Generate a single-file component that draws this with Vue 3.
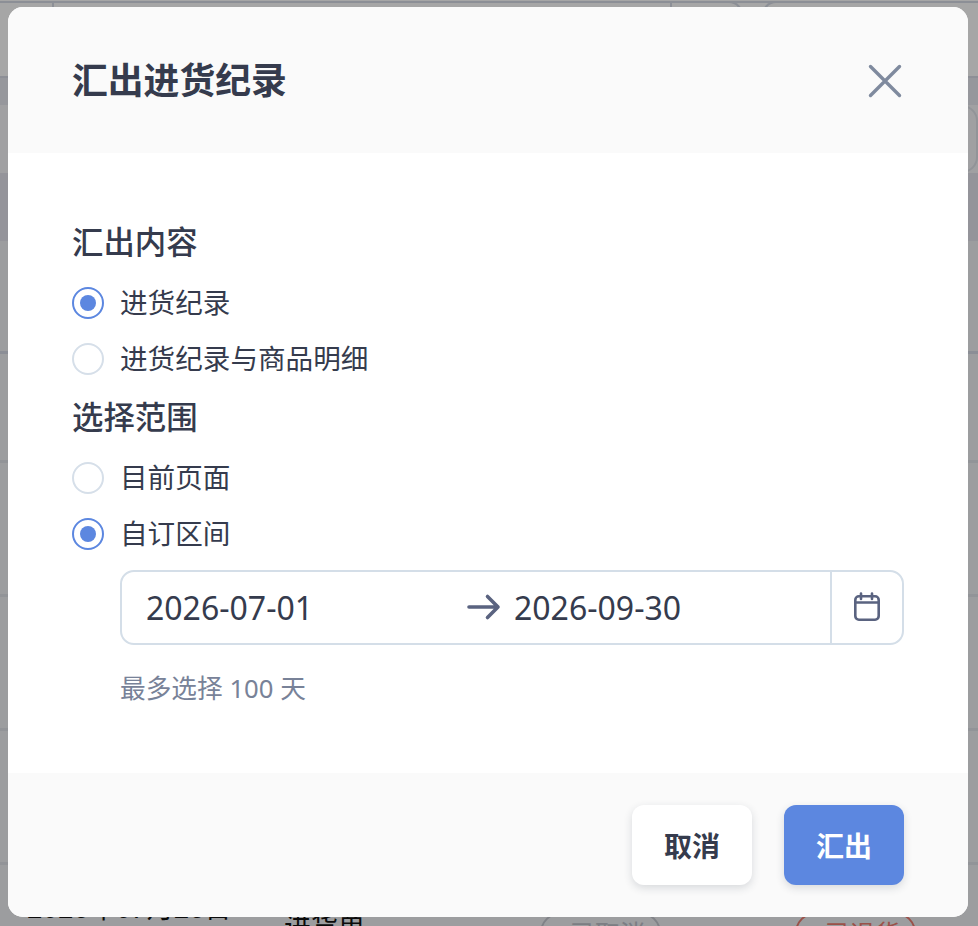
<script setup>
import { ref } from 'vue'

const contentOptions = ['进货纪录', '进货纪录与商品明细']
const rangeOptions = ['目前页面', '自订区间']
const content = ref('进货纪录')
const range = ref('自订区间')
const startDate = ref('2026-07-01')
const endDate = ref('2026-09-30')
</script>

<template>
  <div class="page">
    <!-- 背后的列表页，大部分被弹窗挡住 -->
    <div class="top-line"></div>
    <div class="toolbar">
      <div class="tool-main"></div>
      <div class="tool-select"></div>
      <div class="tool-btn"></div>
    </div>
    <div class="band"></div>
    <div class="filter-row"><div class="filter-box"></div></div>
    <div class="table-head"></div>
    <div class="row row-a"></div>
    <div class="row row-b"></div>
    <div class="row row-c"></div>
    <div class="row row-c"></div>
    <div class="row row-c"></div>
    <div class="row-last">
      <span class="cell-date">2026年07月26日</span>
      <span class="cell-type">进货单</span>
      <span class="pill pill-gray"><i></i>已取消</span>
      <span class="pill pill-red"><i></i>已退货</span>
    </div>

    <div class="overlay">
      <div class="modal">
        <header class="modal-head">
          <h2>汇出进货纪录</h2>
          <button class="close" aria-label="关闭">
            <svg width="36" height="36" viewBox="0 0 36 36" fill="none">
              <path d="M3.5 3.5 L32.5 32.5 M32.5 3.5 L3.5 32.5" stroke="#7f8a9e" stroke-width="3.4" stroke-linecap="round" />
            </svg>
          </button>
        </header>

        <section class="modal-body">
          <div class="group-title">汇出内容</div>
          <div
            v-for="opt in contentOptions"
            :key="opt"
            class="option"
            @click="content = opt"
          >
            <span :class="['radio', { on: content === opt }]"></span>
            <span class="option-text">{{ opt }}</span>
          </div>

          <div class="group-title second">选择范围</div>
          <div
            v-for="opt in rangeOptions"
            :key="opt"
            class="option"
            @click="range = opt"
          >
            <span :class="['radio', { on: range === opt }]"></span>
            <span class="option-text">{{ opt }}</span>
          </div>

          <div class="date-wrap">
            <div class="date-box">
              <div class="date-text">
                <span class="date-start">{{ startDate }}</span>
                <svg class="arrow" width="34" height="28" viewBox="0 0 34 28" fill="none">
                  <path d="M2 14 H31 M20.5 3.5 L31 14 L20.5 24.5" stroke="#5a6380" stroke-width="3.6" stroke-linecap="round" stroke-linejoin="round" />
                </svg>
                <span class="date-end">{{ endDate }}</span>
              </div>
              <div class="date-icon">
                <svg width="30" height="32" viewBox="0 0 30 32" fill="none" stroke="#5a6380" stroke-width="2.6" stroke-linecap="round" stroke-linejoin="round">
                  <rect x="3.3" y="5.3" width="23.4" height="23.4" rx="3.6" />
                  <path d="M3.3 11.5 H26.7 M9 2.5 V8 M20 2.5 V8" />
                </svg>
              </div>
            </div>
            <div class="hint">最多选择 100 天</div>
          </div>
        </section>

        <footer class="modal-foot">
          <button class="btn">取消</button>
          <button class="btn primary">汇出</button>
        </footer>
      </div>
    </div>
  </div>
</template>

<style>
html, body { margin: 0; padding: 0; }
</style>

<style scoped>
.page {
  position: relative;
  height: 926px;
  overflow: hidden;
  background: #f0f1f5;
  font-family: "Noto Sans", "Noto Sans CJK SC", sans-serif;
}
.top-line { height: 1px; background: #fff; }
.toolbar { display: flex; height: 75px; box-sizing: border-box; background: #fff; border-top: 2px solid #d8dce6; }
.tool-main { width: 616px; margin-left: 52px; height: 60px; border-left: 2px solid #d8dce6; border-right: 2px solid #d8dce6; }
.tool-select { width: 69px; height: 60px; border-right: 2px solid #d8dce6; border-top: 2px solid #d8dce6; border-radius: 0 14px 0 0; margin-top: -2px; }
.tool-btn { flex: 1; margin-left: 19px; height: 60px; border-left: 2px solid #d8dce6; border-top: 2px solid #d8dce6; border-radius: 14px 0 0 0; margin-top: -2px; }
.band { height: 29px; background: #e6e8f0; border-top: 2px solid #d9dce6; box-sizing: border-box; }
.filter-row { height: 68px; background: #f6f6f9; display: flex; justify-content: flex-end; }
.filter-box { width: 100px; height: 68px; box-sizing: border-box; border: 2px solid #e0e3ea; border-left: 0; border-radius: 0 16px 16px 0; }
.table-head { height: 68px; background: #e3e4ed; }
.row { box-sizing: border-box; border-top: 3px solid #d6dae6; }
.row-a { height: 110px; border-top: 0; }
.row-b { height: 109px; }
.row-c { height: 134px; border-top-color: #e0e3ea; }
.row-last {
  height: 64px;
  box-sizing: border-box;
  border-top: 3px solid #e0e3ea;
  display: flex;
  align-items: flex-start;
  padding: 41px 0 0 27px;
  font-size: 27px;
  line-height: 40px;
  color: #111;
}
.cell-date { width: 257px; margin-top: -18px; }
.cell-type { width: 256px; }
.pill {
  box-sizing: border-box;
  width: 121px;
  height: 42px;
  margin-top: 6px;
  display: inline-flex;
  align-items: center;
  justify-content: center;
  gap: 8px;
  border: 2px solid #c5c8d0;
  border-radius: 22px;
  color: #bfc2ca;
  font-size: 25px;
}
.pill i { width: 6px; height: 6px; border-radius: 50%; background: currentColor; }
.pill-red { margin-left: 134px; color: #ee7d70; border-color: #ee7d70; }

.overlay {
  position: absolute;
  inset: 0;
  background: rgba(0, 0, 0, 0.35);
  display: flex;
  align-items: flex-start;
  justify-content: center;
  padding: 7px 2px 0 0;
}
.modal {
  width: 960px;
  height: 910px;
  border-radius: 15px;
  overflow: hidden;
  background: #fff;
  display: flex;
  flex-direction: column;
  color: #353b4d;
}
.modal-head {
  height: 146px;
  box-sizing: border-box;
  background: #fafafa;
  padding: 0 65.5px 0 64px;
  display: flex;
  align-items: center;
  justify-content: space-between;
}
.modal-head h2 {
  margin: 0;
  font-size: 35.8px;
  font-weight: 700;
  line-height: 50px;
}
.close { padding: 0; margin-top: 2px; border: 0; background: none; display: flex; cursor: pointer; }

.modal-body { flex: 1; padding: 67px 64px 0; }
.group-title { font-size: 31.4px; font-weight: 500; line-height: 44px; }
.group-title.second { margin-top: 8px; margin-bottom: 11px; }
.group-title:first-child { margin-bottom: 11px; }
.option {
  height: 56px;
  display: flex;
  align-items: center;
  gap: 16px;
  font-size: 27.6px;
  cursor: pointer;
}
.option-text { margin-bottom: 5px; }
.radio {
  box-sizing: border-box;
  width: 32px;
  height: 32px;
  flex: none;
  border: 2px solid #d6dfe9;
  border-radius: 50%;
  position: relative;
}
.radio.on { border-color: #5c87e0; }
.radio.on::after {
  content: "";
  position: absolute;
  inset: 6px;
  border-radius: 50%;
  background: #5c87e0;
}
.date-wrap { margin: 7.5px 0 0 48px; }
.date-box {
  box-sizing: border-box;
  height: 75px;
  width: 784px;
  border: 2px solid #d4dee8;
  border-radius: 14px;
  display: flex;
}
.date-text { flex: 1; display: flex; align-items: center; padding-left: 24px; font-size: 32px; }
.date-start { width: 321px; }
.date-end { margin-left: 13px; }
.date-icon {
  width: 70px;
  border-left: 2px solid #d4dee8;
  display: flex;
  align-items: center;
  justify-content: center;
}
.hint { margin-top: 22px; font-size: 25.7px; line-height: 44px; color: #788298; }

.modal-foot {
  height: 144px;
  box-sizing: border-box;
  background: #fafafa;
  padding: 32px 64px 0 0;
  display: flex;
  justify-content: flex-end;
  align-items: flex-start;
  gap: 32px;
}
.btn {
  width: 120px;
  height: 80px;
  border: 0;
  border-radius: 12px;
  background: #fff;
  color: #353b4d;
  font-family: inherit;
  font-size: 28px;
  font-weight: 700;
  box-shadow: 0 3px 8px rgba(40, 50, 70, 0.16);
  cursor: pointer;
}
.btn.primary { background: #5c87e0; color: #fff; }
</style>
